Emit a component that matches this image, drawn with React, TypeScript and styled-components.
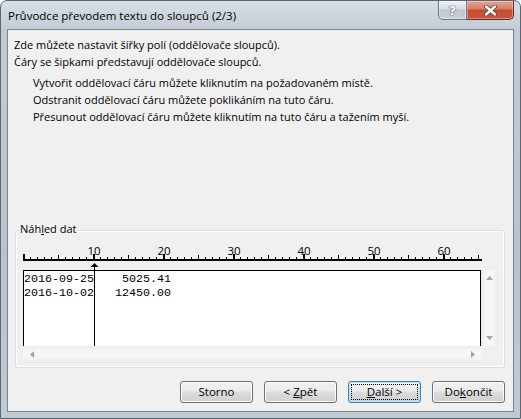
import styled, { createGlobalStyle } from "styled-components";

const UI_FONT = `"Open Sans", "Noto Sans", "DejaVu Sans", sans-serif`;
const CHAR = 7;
const RULER_CHARS = 66;

const GlobalStyle = createGlobalStyle`
  html, body {
    margin: 0;
    padding: 0;
    background: #ffffff;
  }
  body {
    width: 521px;
    height: 419px;
    overflow: hidden;
  }
`;

const Window = styled.div`
  width: 521px;
  height: 419px;
  box-sizing: border-box;
  display: flex;
  flex-direction: column;
  border: 1px solid #5c6774;
  border-radius: 7px 7px 0 0;
  background: linear-gradient(#d8dfe6 0, #c3ccd5 28px, #bac3cc 60%, #c1c9d1 100%);
  font-family: ${UI_FONT};
  font-size: 11px;
  color: #000;
  overflow: hidden;
`;

const TitleBar = styled.div`
  height: 28px;
  display: flex;
  align-items: flex-start;
  flex-shrink: 0;
`;

const Title = styled.div`
  padding: 7px 0 0 7px;
  line-height: 16px;
  font-size: 11.5px;
`;

const CaptionButtons = styled.div`
  margin-left: auto;
  margin-right: 6px;
  display: flex;
`;

const CaptionButton = styled.div<{ $close?: boolean }>`
  width: ${(p) => (p.$close ? 47 : 29)}px;
  height: 19px;
  box-sizing: border-box;
  display: flex;
  align-items: center;
  justify-content: center;
  border: 1px solid ${(p) => (p.$close ? "#6a2c22" : "#6b7683")};
  border-top: none;
  border-left-width: ${(p) => (p.$close ? 0 : 1)}px;
  border-radius: ${(p) => (p.$close ? "0 0 5px 0" : "0 0 0 5px")};
  background: ${(p) =>
    p.$close
      ? "linear-gradient(#e9a592 0, #d77a64 45%, #c24a33 50%, #c9553d 100%)"
      : "linear-gradient(#eef1f4 0, #d5dce3 45%, #bcc6d0 50%, #c9d2db 100%)"};
  box-shadow: inset 0 0 0 1px rgba(255, 255, 255, 0.35);
  color: #fff;
  font-family: "DejaVu Sans", sans-serif;
  font-weight: bold;
  font-size: 13px;
  text-shadow: 0 0 1px #4d5761, 0 0 1px #4d5761, 0 0 1px #4d5761;
`;

const Client = styled.div`
  flex: 1;
  margin: 0 6px 6px;
  border: 1px solid #7a8591;
  background: #f0f0f0;
  display: flex;
  flex-direction: column;
  padding: 0 8px 8px 6px;
`;

const Intro = styled.div`
  padding-top: 6px;
  line-height: 17px;
`;

const Hints = styled.div`
  margin-top: 4px;
  padding-left: 19px;
  line-height: 17px;
`;

const GroupBox = styled.div`
  position: relative;
  margin-top: auto;
  margin-left: 1px;
  height: 138px;
  box-sizing: border-box;
  border: 1px solid #d5dfe5;
  border-radius: 3px;
  box-shadow: inset 0 0 0 1px #ffffff;
  padding: 13px 0 0 7px;
`;

const GroupLabel = styled.div`
  position: absolute;
  top: -10px;
  left: 3px;
  padding: 0 1px;
  line-height: 16px;
  background: #f0f0f0;
`;

const PreviewWrap = styled.div`
  position: relative;
  width: 475px;
`;

const Ruler = styled.svg`
  display: block;
  overflow: visible;
`;

const PreviewGrid = styled.div`
  display: grid;
  grid-template-columns: 458px 17px;
  grid-template-rows: 76px 16px;
`;

const DataBox = styled.div`
  box-sizing: border-box;
  background: #ffffff;
  border: 1px solid #000;
  border-bottom: none;
  padding: 1px 0 0 0;
  font-family: "Liberation Mono", "Courier New", monospace;
  font-size: 11.67px;
  line-height: 14px;
  white-space: pre;
  overflow: hidden;
`;

const ScrollTrack = styled.div<{ $vertical?: boolean }>`
  display: flex;
  flex-direction: ${(p) => (p.$vertical ? "column" : "row")};
  justify-content: space-between;
  background: ${(p) =>
    p.$vertical
      ? "linear-gradient(to right, #ebebeb, #f6f6f6 30%, #f6f6f6 70%, #ebebeb)"
      : "linear-gradient(#ebebeb, #f6f6f6 30%, #f6f6f6 70%, #ebebeb)"};
`;

const ScrollArrow = styled.div`
  width: 17px;
  height: 16px;
  flex: 0 0 auto;
  display: flex;
  align-items: center;
  justify-content: center;
  svg {
    display: block;
  }
`;

const ColumnMarker = styled.svg`
  position: absolute;
  left: 67px;
  top: 19px;
`;

const ButtonRow = styled.div`
  margin-top: 13px;
  display: flex;
  justify-content: flex-end;
  gap: 11px;
`;

const Button = styled.button<{ $default?: boolean }>`
  position: relative;
  width: 73px;
  height: 22px;
  padding: 0;
  box-sizing: border-box;
  border: 1px solid ${(p) => (p.$default ? "#3c7fb1" : "#707070")};
  border-radius: 3px;
  background: linear-gradient(#f2f2f2 0, #ebebeb 45%, #dddddd 50%, #cfcfcf 100%);
  box-shadow: inset 0 0 0 1px ${(p) => (p.$default ? "#bfe3f7" : "#fcfcfc")};
  font-family: ${UI_FONT};
  font-size: 11.5px;
  color: #000;
  line-height: 18px;

  &::after {
    content: "";
    display: ${(p) => (p.$default ? "block" : "none")};
    position: absolute;
    inset: 2px;
    border: 1px dotted #000;
  }
`;

const Arrow = ({ dir }: { dir: "up" | "down" | "left" | "right" }) => {
  const pts = {
    up: "3.5,0 7,4 0,4",
    down: "0,0 7,0 3.5,4",
    left: "4,0 4,7 0,3.5",
    right: "0,0 4,3.5 0,7",
  }[dir];
  const vertical = dir === "up" || dir === "down";
  return (
    <svg width={vertical ? 7 : 4} height={vertical ? 4 : 7}>
      <polygon points={pts} fill="#a3a3a3" />
    </svg>
  );
};

const RulerDrawing = () => {
  const ticks = Array.from({ length: RULER_CHARS }, (_, n) => n);
  return (
    <Ruler width={460} height={26}>
      {ticks.map((n) =>
        n % 10 === 0 ? (
          <rect key={n} x={n * CHAR} y={10} width={2} height={5} fill="#000" />
        ) : n % 5 === 0 ? (
          <rect key={n} x={n * CHAR} y={11} width={1} height={4} fill="#000" />
        ) : (
          <rect key={n} x={n * CHAR} y={13} width={1} height={2} fill="#000" />
        )
      )}
      <rect x={0} y={15} width={459} height={2} fill="#000" />
      {ticks
        .filter((n) => n > 0 && n % 10 === 0)
        .map((n) => (
          <text
            key={n}
            x={n * CHAR + 1}
            y={11}
            textAnchor="middle"
            fontFamily={UI_FONT}
            fontSize={11.5}
            fill="#000"
          >
            {n}
          </text>
        ))}
    </Ruler>
  );
};

const rows = ["2016-09-25    5025.41", "2016-10-02   12450.00"];

export default function App() {
  return (
    <>
      <GlobalStyle />
      <Window>
        <TitleBar>
          <Title>Průvodce převodem textu do sloupců (2/3)</Title>
          <CaptionButtons>
            <CaptionButton>?</CaptionButton>
            <CaptionButton $close>
              <svg width={13} height={11} viewBox="0 0 13 11">
                <path d="M2 1.5 L11 9.5 M11 1.5 L2 9.5" stroke="#5a3a34" strokeWidth={4} strokeLinecap="round" />
                <path d="M2 1.5 L11 9.5 M11 1.5 L2 9.5" stroke="#ffffff" strokeWidth={2.4} strokeLinecap="round" />
              </svg>
            </CaptionButton>
          </CaptionButtons>
        </TitleBar>
        <Client>
          <Intro>
            <div>Zde můžete nastavit šířky polí (oddělovače sloupců).</div>
            <div>Čáry se šipkami představují oddělovače sloupců.</div>
            <Hints>
              <div>Vytvořit oddělovací čáru můžete kliknutím na požadovaném místě.</div>
              <div>Odstranit oddělovací čáru můžete poklikáním na tuto čáru.</div>
              <div>Přesunout oddělovací čáru můžete kliknutím na tuto čáru a tažením myší.</div>
            </Hints>
          </Intro>
          <GroupBox>
            <GroupLabel>
              Náh<u>l</u>ed dat
            </GroupLabel>
            <PreviewWrap>
              <RulerDrawing />
              <PreviewGrid>
                <DataBox>{rows.join("\n")}</DataBox>
                <ScrollTrack $vertical>
                  <ScrollArrow>
                    <Arrow dir="up" />
                  </ScrollArrow>
                  <ScrollArrow>
                    <Arrow dir="down" />
                  </ScrollArrow>
                </ScrollTrack>
                <ScrollTrack>
                  <ScrollArrow>
                    <Arrow dir="left" />
                  </ScrollArrow>
                  <ScrollArrow>
                    <Arrow dir="right" />
                  </ScrollArrow>
                </ScrollTrack>
              </PreviewGrid>
              <ColumnMarker width={9} height={83}>
                <polygon points="4.5,0 8.5,4 0.5,4" fill="#000" />
                <rect x={4} y={4} width={1} height={79} fill="#000" />
              </ColumnMarker>
            </PreviewWrap>
          </GroupBox>
          <ButtonRow>
            <Button>Storno</Button>
            <Button>
              &lt; <u>Z</u>pět
            </Button>
            <Button $default>
              <u>D</u>alší &gt;
            </Button>
            <Button>
              Do<u>k</u>ončit
            </Button>
          </ButtonRow>
        </Client>
      </Window>
    </>
  );
}
